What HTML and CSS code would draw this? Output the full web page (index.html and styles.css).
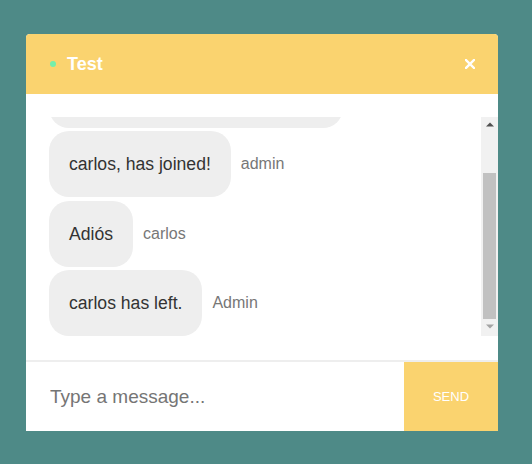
FILE: index.html
```html
<!DOCTYPE html>
<html lang="en">
<head>
<meta charset="utf-8">
<title>Chat</title>
<link rel="stylesheet" href="styles.css">
</head>
<body>
<div class="chat">
  <div class="chat-header">
    <span class="status-dot"></span>
    <span class="chat-title">Test</span>
    <button class="close-btn" aria-label="Close">
      <svg width="10" height="10" viewBox="0 0 10 10"><path d="M1 1 L9 9 M9 1 L1 9" stroke="#fff" stroke-width="2.4" stroke-linecap="square"/></svg>
    </button>
  </div>
  <div class="chat-body">
    <div class="scroller">
      <div class="message-list">
        <div class="message"><div class="bubble bubble-earlier"></div></div>
        <div class="message"><div class="bubble">carlos, has joined!</div><span class="author">admin</span></div>
        <div class="message"><div class="bubble">Adiós</div><span class="author">carlos</span></div>
        <div class="message"><div class="bubble">carlos has left.</div><span class="author">Admin</span></div>
      </div>
    </div>
    <div class="scrollbar" aria-hidden="true">
      <div class="sb-btn">
        <svg width="8" height="5" viewBox="0 0 8 5"><path d="M0 4.5 L4 0.5 L8 4.5 Z" fill="#505050"/></svg>
      </div>
      <div class="sb-track"><div class="sb-thumb"></div></div>
      <div class="sb-btn sb-btn-down">
        <svg width="8" height="5" viewBox="0 0 8 5"><path d="M0 0.5 L4 4.5 L8 0.5 Z" fill="#a3a3a3"/></svg>
      </div>
    </div>
  </div>
  <form class="chat-footer">
    <input class="chat-input" type="text" placeholder="Type a message...">
    <button class="send-btn" type="button">SEND</button>
  </form>
</div>
</body>
</html>
```

FILE: styles.css
```css
html, body {
  margin: 0;
  padding: 0;
}
body {
  background: #4e8a87;
  font-family: "Liberation Sans", Arial, sans-serif;
  width: 532px;
  height: 464px;
  overflow: hidden;
}
.chat {
  margin: 34px 0 0 26px;
  width: 472px;
  height: 397px;
  background: #fff;
  border-radius: 4px 4px 0 0;
  display: flex;
  flex-direction: column;
  overflow: hidden;
}
.chat-header {
  height: 60px;
  flex: none;
  background: #fad36f;
  display: flex;
  align-items: center;
  padding: 0 23px 0 24px;
}
.status-dot {
  width: 6px;
  height: 6px;
  border-radius: 50%;
  background: #74efab;
  margin-right: 11px;
}
.chat-title {
  color: #fff;
  font-weight: bold;
  font-size: 18px;
  flex: 1;
}
.close-btn {
  border: 0;
  background: none;
  padding: 0;
  width: 10px;
  height: 10px;
  display: flex;
}
.chat-body {
  flex: none;
  padding: 23px 0 24px;
  display: flex;
  height: 219px;
}
.scroller {
  flex: 1;
  height: 219px;
  overflow: hidden;
  display: flex;
  flex-direction: column-reverse;
}
.message-list {
  display: flex;
  flex-direction: column;
  gap: 3.5px;
  padding: 10px 0 0 23px;
}
.message {
  display: flex;
  align-items: center;
}
.bubble {
  background: #eeeeee;
  color: #333;
  font-size: 17.6px;
  line-height: 20px;
  padding: 23px 20px;
  border-radius: 20px;
}
.bubble-earlier {
  width: 254px;
  height: 20px;
}
.author {
  color: #777;
  font-size: 16px;
  margin-left: 10px;
}
.scrollbar {
  width: 17px;
  flex: none;
  background: #f1f1f1;
  display: flex;
  flex-direction: column;
}
.sb-btn {
  height: 15px;
  flex: none;
  display: flex;
  align-items: center;
  justify-content: center;
  padding-left: 1px;
}
.sb-btn-down {
  align-items: flex-start;
  padding-top: 3px;
  height: 12px;
}
.sb-track {
  flex: 1;
  padding: 41px 2px 0;
}
.sb-thumb {
  height: 146px;
  background: #c1c1c1;
}
.chat-footer {
  margin: 0;
  flex: 1;
  display: flex;
  border-top: 2px solid #eeeeee;
}
.chat-input {
  flex: 1;
  border: 0;
  outline: none;
  padding: 0 0 0 24px;
  font-family: "Liberation Sans", Arial, sans-serif;
  font-size: 19px;
  color: #333;
}
.chat-input::placeholder {
  color: #757575;
}
.send-btn {
  width: 94px;
  border: 0;
  background: #fad36f;
  color: #fff;
  font-family: "Liberation Sans", Arial, sans-serif;
  font-size: 13px;
  padding: 0;
}
```
